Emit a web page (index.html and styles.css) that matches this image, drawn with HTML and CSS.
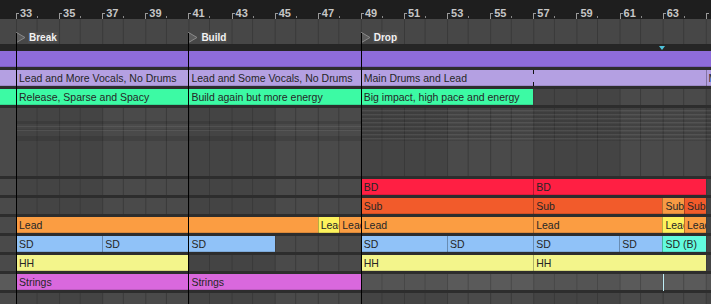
FILE: index.html
```html
<!DOCTYPE html>
<html>

<head>
  <title>Arrangement</title>
  <link rel="stylesheet" href="styles.css">
</head>

<body>
  <div class="arrangement">
    <!-- bar numbers -->
    <div class="ruler">
      <div class="ruler-cell"><span class="tick"></span><span class="bar-num">33</span></div>
      <div class="ruler-cell"><span class="tick"></span><span class="bar-num">35</span></div>
      <div class="ruler-cell"><span class="tick"></span><span class="bar-num">37</span></div>
      <div class="ruler-cell"><span class="tick"></span><span class="bar-num">39</span></div>
      <div class="ruler-cell"><span class="tick"></span><span class="bar-num">41</span></div>
      <div class="ruler-cell"><span class="tick"></span><span class="bar-num">43</span></div>
      <div class="ruler-cell"><span class="tick"></span><span class="bar-num">45</span></div>
      <div class="ruler-cell"><span class="tick"></span><span class="bar-num">47</span></div>
      <div class="ruler-cell"><span class="tick"></span><span class="bar-num">49</span></div>
      <div class="ruler-cell"><span class="tick"></span><span class="bar-num">51</span></div>
      <div class="ruler-cell"><span class="tick"></span><span class="bar-num">53</span></div>
      <div class="ruler-cell"><span class="tick"></span><span class="bar-num">55</span></div>
      <div class="ruler-cell"><span class="tick"></span><span class="bar-num">57</span></div>
      <div class="ruler-cell"><span class="tick"></span><span class="bar-num">59</span></div>
      <div class="ruler-cell"><span class="tick"></span><span class="bar-num">61</span></div>
      <div class="ruler-cell"><span class="tick"></span><span class="bar-num">63</span></div>
      <div class="ruler-cell"><span class="tick"></span></div>
    </div>

    <!-- locators -->
    <div class="bars loc-lane">
      <div class="locator from-33 to-37">
        <svg width="10" height="11" viewBox="0 0 10 11"><polygon points="0.5,0.5 9,5.5 0.5,10.5" fill="#5c5c5c" stroke="#8a8a8a" /></svg>
        <span>Break</span>
      </div>
      <div class="locator from-41 to-45">
        <svg width="10" height="11" viewBox="0 0 10 11"><polygon points="0.5,0.5 9,5.5 0.5,10.5" fill="#5c5c5c" stroke="#8a8a8a" /></svg>
        <span>Build</span>
      </div>
      <div class="locator from-49 to-53">
        <svg width="10" height="11" viewBox="0 0 10 11"><polygon points="0.5,0.5 9,5.5 0.5,10.5" fill="#5c5c5c" stroke="#8a8a8a" /></svg>
        <span>Drop</span>
      </div>
    </div>

    <div class="bars cue-band">
      <span class="cue from-63"></span>
    </div>

    <!-- tracks -->
    <div class="bars track">
      <div class="clip purple from-pre to-66"></div>
    </div>

    <div class="bars track">
      <div class="clip lavender from-pre to-33"></div>
      <div class="clip lavender from-33 to-41">Lead and More Vocals, No Drums</div>
      <div class="clip lavender from-41 to-49">Lead and Some Vocals, No Drums</div>
      <div class="clip lavender from-49 to-57">Main Drums and Lead</div>
      <div class="clip lavender loop-start from-57 to-65"></div>
      <div class="clip lavender from-65 to-66">Main Drums and Lead</div>
    </div>

    <div class="bars track">
      <div class="clip mint from-pre to-33"></div>
      <div class="clip mint from-33 to-41">Release, Sparse and Spacy</div>
      <div class="clip mint from-41 to-49">Build again but more energy</div>
      <div class="clip mint from-49 to-57">Big impact, high pace and energy</div>
    </div>

    <div class="bars track tall">
      <div class="notes notes-a from-33 to-49"></div>
      <div class="notes notes-b from-49 to-66"></div>
    </div>

    <div class="bars track">
      <div class="clip red from-49 to-57">BD</div>
      <div class="clip red from-57 to-65">BD</div>
    </div>

    <div class="bars track">
      <div class="clip rust from-49 to-57">Sub</div>
      <div class="clip rust from-57 to-63">Sub</div>
      <div class="clip tangerine from-63 to-64">Sub</div>
      <div class="clip rust from-64 to-65">Sub</div>
    </div>

    <div class="bars track">
      <div class="clip orange from-33 to-47">Lead</div>
      <div class="clip yellow from-47 to-48">Lead</div>
      <div class="clip orange from-48 to-49">Lead</div>
      <div class="clip orange from-49 to-57">Lead</div>
      <div class="clip orange from-57 to-63">Lead</div>
      <div class="clip yellow from-63 to-64">Lead</div>
      <div class="clip orange from-64 to-65">Lead</div>
    </div>

    <div class="bars track">
      <div class="clip blue from-33 to-37">SD</div>
      <div class="clip blue from-37 to-41">SD</div>
      <div class="clip blue from-41 to-45">SD</div>
      <div class="clip blue from-49 to-53">SD</div>
      <div class="clip blue from-53 to-57">SD</div>
      <div class="clip blue from-57 to-61">SD</div>
      <div class="clip blue from-61 to-63">SD</div>
      <div class="clip aqua from-63 to-65">SD (B)</div>
    </div>

    <div class="bars track">
      <div class="clip lemon from-33 to-41">HH</div>
      <div class="clip lemon from-49 to-57">HH</div>
      <div class="clip lemon from-57 to-65">HH</div>
    </div>

    <div class="bars track selected">
      <div class="clip magenta from-33 to-41">Strings</div>
      <div class="clip magenta from-41 to-49">Strings</div>
    </div>

    <div class="bars track"></div>

    <!-- lines drawn over everything -->
    <div class="locator-line line-33"></div>
    <div class="locator-line line-41"></div>
    <div class="locator-line line-49"></div>
    <div class="playhead"></div>
  </div>
</body>

</html>
```

FILE: styles.css
```css
body, html {
  margin: 0;
  padding: 0;
}

body {
  background: #2d2d2d;
  font-family: "Liberation Sans", Arial, sans-serif;
}

.arrangement {
  --bar: 21.56px;
  --shade-dark: #444444;
  --shade-light: #4a4a4a;
  --grid-line: #393939;
  position: relative;
  width: 711px;
  height: 304px;
  overflow: hidden;
  background: #2d2d2d;
}

/* Ruler with the bar numbers */
.ruler {
  height: 19px;
  display: flex;
  padding-left: 16px;
  background: #1e1e1e;
}

.ruler-cell {
  flex: none;
  width: calc(var(--bar) * 2);
  display: flex;
  align-items: flex-start;
  /* small dot on the even bars */
  background: linear-gradient(#8a8a8a, #8a8a8a) no-repeat 21px 16px / 1px 2px;
}

.tick {
  box-sizing: border-box;
  width: 3px;
  height: 6px;
  margin-top: 13px;
  border-left: 1px solid #9a9a9a;
  border-top: 1px solid #9a9a9a;
}

.bar-num {
  margin-top: 7px;
  margin-left: 1px;
  font-size: 11px;
  line-height: 12px;
  font-weight: bold;
  color: #c6c6c6;
}

/* Every lane shares the same bar columns */
.bars {
  display: grid;
  grid-template-columns: 16px repeat(34, var(--bar));
  background-color: var(--shade-light);
  background-image:
    linear-gradient(to right, var(--grid-line) 0 1px, transparent 1px 21px, var(--grid-line) 21px 22px, transparent 22px),
    linear-gradient(to right, var(--shade-dark) 0 calc(var(--bar) * 4), var(--shade-light) calc(var(--bar) * 4) calc(var(--bar) * 8));
  background-size: calc(var(--bar) * 2) 100%, calc(var(--bar) * 8) 100%;
  background-position: 16px 0, 16px 0;
}

.loc-lane {
  height: 25px;
  --shade-dark: #474747;
  --shade-light: #474747;
}

.locator {
  align-self: end;
  margin-bottom: 1px;
  display: flex;
  align-items: center;
  gap: 2px;
  white-space: nowrap;
}

.locator svg {display: block;}

.locator span {
  font-size: 10px;
  font-weight: bold;
  color: #f2f2f2;
  line-height: 11px;
  padding: 0 1px;
  background: #4d4d4d;
}

.cue-band {
  height: 7px;
  background: #262626;
}

.cue {
  margin: 2px 0 0 -3px;
  width: 0;
  height: 0;
  border-left: 3.5px solid transparent;
  border-right: 3.5px solid transparent;
  border-top: 4px solid #4fc3dc;
}

.track {
  height: 16px;
  margin-bottom: 3px;
}

.track.tall {height: 68px;}

.track.selected {
  --shade-dark: #545454;
  --shade-light: #5a5a5a;
  --grid-line: #474747;
}

/* Clips */
.clip {
  overflow: hidden;
  white-space: nowrap;
  padding-left: 3px;
  font-size: 10.5px;
  line-height: 16px;
  color: #262626;
  box-shadow: inset 1px 0 rgba(0, 0, 0, 0.28), inset 0 -1px rgba(0, 0, 0, 0.12);
}

.clip.from-pre {box-shadow: inset 0 -1px rgba(0, 0, 0, 0.12);}

.purple    {background: #8e6cda;}
.lavender  {background: #b4a0e2;}
.mint      {background: #3cfaa4;}
.red       {background: #ff1f43;}
.rust      {background: #f25b2b;}
.tangerine {background: #f89a43;}
.orange    {background: #fb9d42;}
.yellow    {background: #fdf25c;}
.blue      {background: #90c2f8;}
.aqua      {background: #62fbde;}
.lemon     {background: #f3f58b;}
.magenta   {background: #d968dd;}

.loop-start {
  box-shadow: inset 0 -1px rgba(0, 0, 0, 0.12);
  background-image: linear-gradient(#111 0 4px, transparent 4px 12px, #111 12px 16px);
  background-size: 1px 100%;
  background-repeat: no-repeat;
}

/* the folded note lanes in the tall track */
.notes-a {
  margin-top: 13px;
  height: 20px;
  background: linear-gradient(to bottom,
    rgba(0, 0, 0, 0.12) 0 3px, transparent 3px 5px,
    rgba(255, 255, 255, 0.07) 5px 6px, transparent 6px 8px,
    rgba(0, 0, 0, 0.08) 8px 9px, rgba(255, 255, 255, 0.07) 9px 10px,
    transparent 10px 15px, rgba(0, 0, 0, 0.12) 15px 20px);
}

.notes-b {
  height: 33px;
  background: repeating-linear-gradient(to bottom,
    rgba(0, 0, 0, 0.1) 0 2px, rgba(255, 255, 255, 0.05) 2px 3px, transparent 3px 4px);
}

/* Column placement: bar b starts on grid line b - 31 */
.from-pre {grid-column-start: 1;}
.from-33 {grid-column-start: 2;}
.from-37 {grid-column-start: 6;}
.from-41 {grid-column-start: 10;}
.from-45 {grid-column-start: 14;}
.from-47 {grid-column-start: 16;}
.from-48 {grid-column-start: 17;}
.from-49 {grid-column-start: 18;}
.from-53 {grid-column-start: 22;}
.from-57 {grid-column-start: 26;}
.from-61 {grid-column-start: 30;}
.from-63 {grid-column-start: 32;}
.from-64 {grid-column-start: 33;}
.from-65 {grid-column-start: 34;}

.to-33 {grid-column-end: 2;}
.to-37 {grid-column-end: 6;}
.to-41 {grid-column-end: 10;}
.to-45 {grid-column-end: 14;}
.to-47 {grid-column-end: 16;}
.to-48 {grid-column-end: 17;}
.to-49 {grid-column-end: 18;}
.to-53 {grid-column-end: 22;}
.to-57 {grid-column-end: 26;}
.to-61 {grid-column-end: 30;}
.to-63 {grid-column-end: 32;}
.to-64 {grid-column-end: 33;}
.to-65 {grid-column-end: 34;}
.to-66 {grid-column-end: 35;}

/* Overlays */
.locator-line {
  position: absolute;
  top: 33px;
  bottom: 0;
  width: 1px;
  background: #000;
}

.line-33 {left: 16px;}
.line-41 {left: 188px;}
.line-49 {left: 361px;}

.playhead {
  position: absolute;
  left: 663px;
  top: 274px;
  width: 1px;
  height: 17px;
  background: #bfeef7;
}
```
